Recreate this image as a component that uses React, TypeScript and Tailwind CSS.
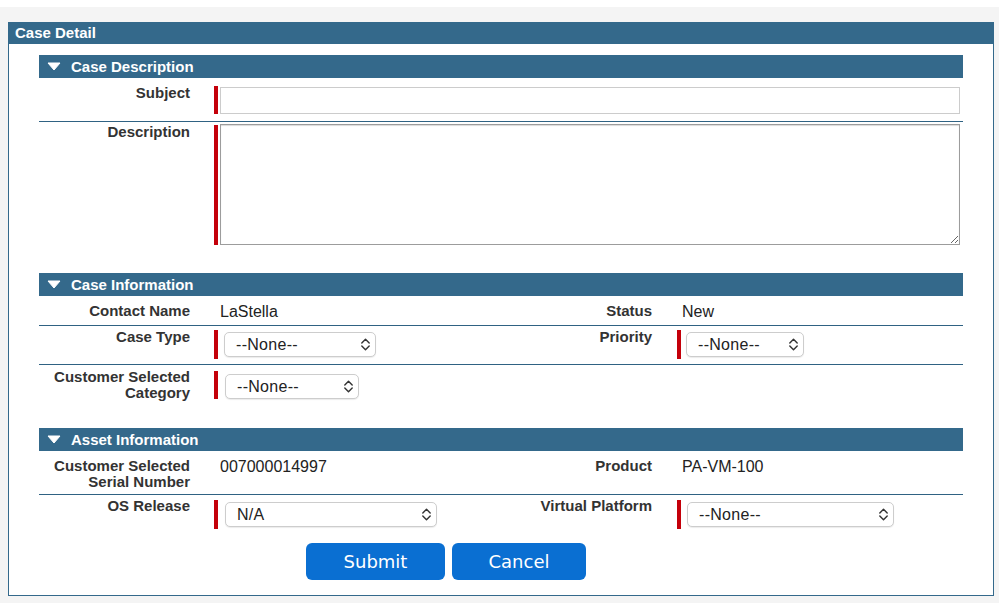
import React from "react";

function Chevrons() {
  return (
    <svg width="11" height="17" viewBox="0 0 11 17" fill="none" className="shrink-0">
      <path d="M1.8 7 L5.5 3.2 L9.2 7" stroke="#333" strokeWidth="1.4" strokeLinecap="round" strokeLinejoin="round" />
      <path d="M1.8 10 L5.5 13.8 L9.2 10" stroke="#333" strokeWidth="1.4" strokeLinecap="round" strokeLinejoin="round" />
    </svg>
  );
}

function Select({ value, className }: { value: string; className: string }) {
  return (
    <div
      className={
        "flex items-center justify-between h-[25px] rounded-[5px] border border-[#cdcdcd] bg-white pl-[11px] pr-[4px] shadow-[0_1px_1px_rgba(0,0,0,0.08)] text-[16px] leading-[18px] text-[#222] " +
        className
      }
    >
      <span className="tracking-[0.3px]">{value}</span>
      <Chevrons />
    </div>
  );
}

function Bar({ className }: { className: string }) {
  return <div className={"w-[4px] bg-[#c4000a] shrink-0 " + className} />;
}

function SectionHeader({ title }: { title: string }) {
  return (
    <div className="h-[23px] bg-[#34698b] flex items-center text-white font-bold text-[15px] leading-[17px]">
      <svg width="14" height="9" viewBox="0 0 14 9" className="ml-[8px] mr-[10px]">
        <path d="M1 1 L13 1 L7 8 Z" fill="#fff" stroke="#fff" strokeWidth="1" strokeLinejoin="round" />
      </svg>
      <span>{title}</span>
    </div>
  );
}

function Label({ children }: { children: React.ReactNode }) {
  return (
    <div className="w-[175px] shrink-0 pr-[24px] text-right font-bold text-[15px] leading-[16px] text-[#333]">
      {children}
    </div>
  );
}

export default function App() {
  return (
    <div className="w-[999px] h-[603px] bg-white overflow-hidden font-['Liberation_Sans',Arial,sans-serif]">
      <div className="h-[7px] bg-white" />
      <div className="h-[596px] bg-[#f4f4f4] pl-[8px] pr-[5px] pt-[15px]">
        <div className="h-[574px] bg-white border border-t-0 border-[#34698b]">
          <div className="h-[22px] bg-[#34698b] text-white font-bold text-[15px] leading-[22px] pl-[6px]">
            Case Detail
          </div>
          <div className="px-[30px] pt-[11px]">
            {/* Case Description */}
            <SectionHeader title="Case Description" />
            <div className="flex items-start pt-[6px] pb-[7px] border-b border-[#2f6283]">
              <div className="pt-[1px]">
                <Label>Subject</Label>
              </div>
              <div className="flex items-start pt-[2px] flex-1">
                <Bar className="h-[28px]" />
                <div className="ml-[2px] mt-[1px] h-[27px] w-[740px] border border-[#cccccc] bg-white" />
              </div>
            </div>
            <div className="flex items-start pt-[2px]">
              <Label>Description</Label>
              <div className="flex items-start">
                <Bar className="h-[120px] mt-[1px]" />
                <textarea className="ml-[2px] h-[121px] w-[740px] border border-[#9c9c9c] bg-white shadow-[inset_0_1px_1px_rgba(0,0,0,0.15)] outline-none block" />
              </div>
            </div>

            {/* Case Information */}
            <div className="mt-[28px]">
              <SectionHeader title="Case Information" />
            </div>
            <div className="flex items-start pt-[7px] pb-[4px] border-b border-[#2f6283] h-[30px]">
              <Label>Contact Name</Label>
              <div className="w-[287px] pl-[6px] text-[16px] leading-[18px] text-[#222]">LaStella</div>
              <Label>Status</Label>
              <div className="pl-[6px] text-[16px] leading-[18px] text-[#222]">New</div>
            </div>
            <div className="flex items-start pt-[3px] pb-[5px] border-b border-[#2f6283]">
              <Label>Case Type</Label>
              <div className="w-[287px] flex items-start">
                <Bar className="h-[29px] mt-[1px]" />
                <Select value="--None--" className="ml-[6px] mt-[3px] w-[152px]" />
              </div>
              <Label>Priority</Label>
              <div className="flex items-start pl-[1px]">
                <Bar className="h-[29px] mt-[1px]" />
                <Select value="--None--" className="ml-[5px] mt-[3px] w-[118px]" />
              </div>
            </div>
            <div className="flex items-start pt-[4px] pb-[5px]">
              <Label>
                Customer Selected
                <br />
                Category
              </Label>
              <div className="w-[287px] flex items-start">
                <Bar className="h-[28px] mt-[2px]" />
                <Select value="--None--" className="ml-[7px] mt-[5px] w-[134px] h-[24px]" />
              </div>
            </div>

            {/* Asset Information */}
            <div className="mt-[22px]">
              <SectionHeader title="Asset Information" />
            </div>
            <div className="flex items-start pt-[7px] pb-[4px] border-b border-[#2f6283]">
              <Label>
                Customer Selected
                <br />
                Serial Number
              </Label>
              <div className="w-[287px] pl-[6px] text-[16px] leading-[18px] text-[#222]">007000014997</div>
              <Label>Product</Label>
              <div className="pl-[6px] text-[16px] leading-[18px] text-[#222]">PA-VM-100</div>
            </div>
            <div className="flex items-start pt-[3px]">
              <Label>OS Release</Label>
              <div className="w-[287px] flex items-start">
                <Bar className="h-[29px] mt-[2px]" />
                <Select value="N/A" className="ml-[7px] mt-[4px] w-[212px]" />
              </div>
              <Label>Virtual Platform</Label>
              <div className="flex items-start pl-[1px]">
                <Bar className="h-[29px] mt-[2px]" />
                <Select value="--None--" className="ml-[6px] mt-[4px] w-[207px]" />
              </div>
            </div>

            {/* Buttons */}
            <div className="flex gap-[7px] ml-[267px] mt-[14px] font-['DejaVu_Sans',Verdana,sans-serif]">
              <button className="w-[139px] h-[37px] rounded-[6px] bg-[#0a6fd2] text-white text-[18px] leading-[37px]">
                Submit
              </button>
              <button className="w-[134px] h-[37px] rounded-[6px] bg-[#0a6fd2] text-white text-[18px] leading-[37px]">
                Cancel
              </button>
            </div>
          </div>
        </div>
      </div>
    </div>
  );
}
